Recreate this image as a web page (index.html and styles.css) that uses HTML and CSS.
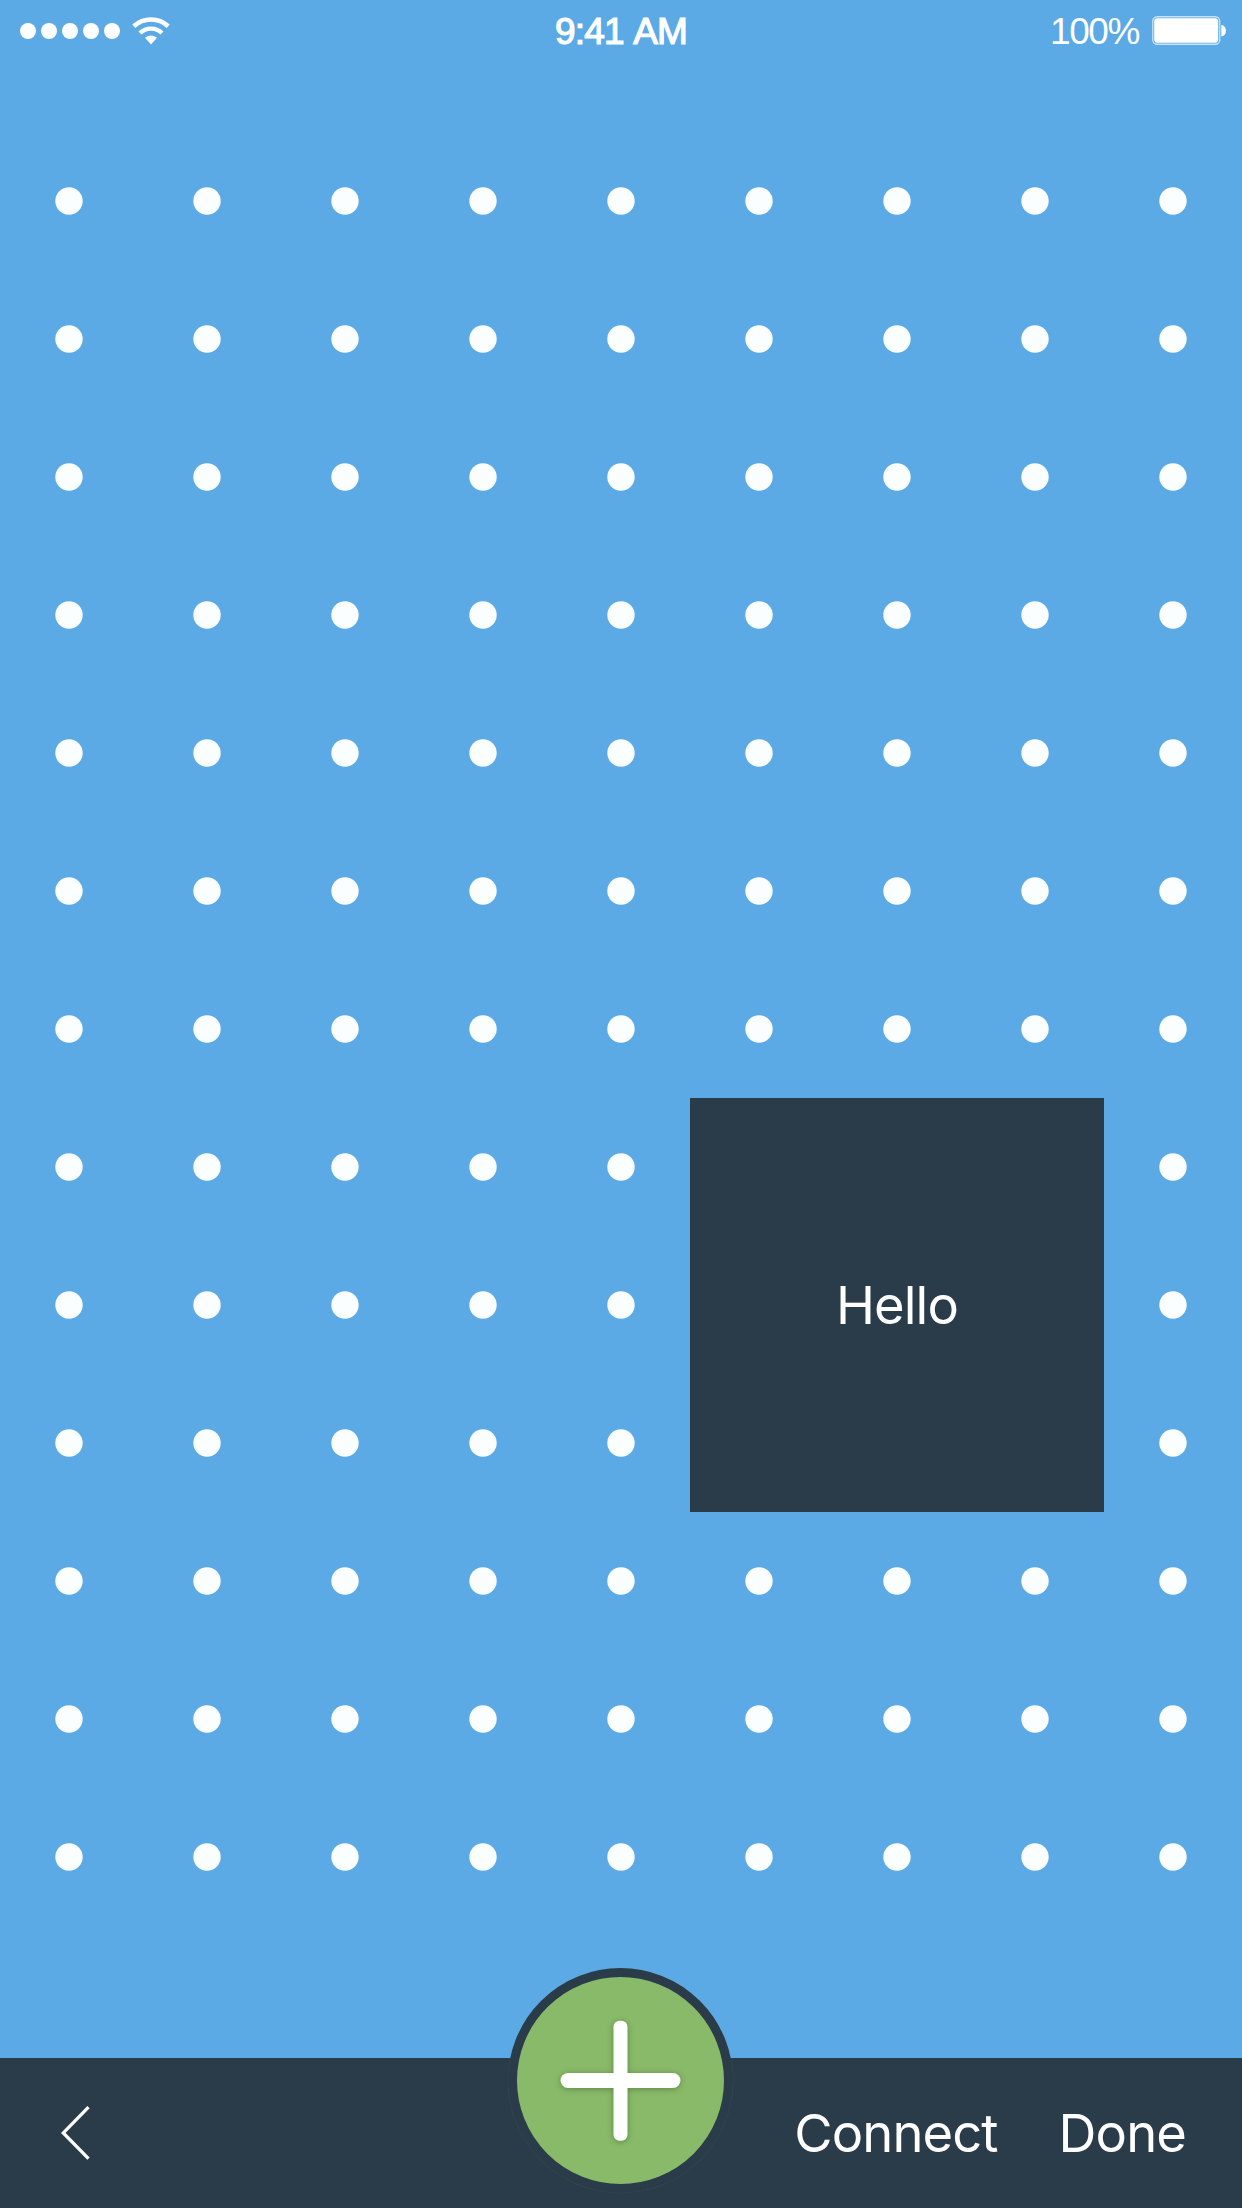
FILE: index.html
```html
<!DOCTYPE html>
<html lang="en">
<head>
<meta charset="utf-8">
<title>Board</title>
<link rel="stylesheet" href="styles.css">
</head>
<body>
<div class="screen">
  <header class="status">
    <div class="status-left">
      <svg class="signal" width="100" height="16" viewBox="0 0 100 16" fill="#fff"><circle cx="8" cy="8" r="8"/><circle cx="29" cy="8" r="8"/><circle cx="50" cy="8" r="8"/><circle cx="71" cy="8" r="8"/><circle cx="92" cy="8" r="8"/></svg>
      <svg class="wifi" width="38" height="28" viewBox="0 0 38 28"><g fill="none" stroke="#fff"><path d="M1.8 9.3A25.3 25.3 0 0 1 36.2 9.3" stroke-width="4.600"/><path d="M8 16A16 16 0 0 1 30 16" stroke-width="4.300"/></g><path d="M13 20.800Q19 16.200 25 20.800L19 27.400Z" fill="#fff"/></svg>
    </div>
    <div class="time">9:41 AM</div>
    <div class="status-right">
      <span class="percent">100%</span>
      <svg class="battery" width="75" height="30" viewBox="0 0 75 30"><rect x=".75" y=".75" width="67" height="27.500" rx="4.500" fill="none" stroke="#c8e3f8" stroke-width="1.300"/><rect x="2.200" y="2.200" width="64" height="24.600" rx="3" fill="#fff"/><path d="M69.300 9C75.500 9.500 75.500 19.800 69.300 20.300Z" fill="#fff"/></svg>
    </div>
  </header>
  <main class="board">
    <svg class="dots" width="1242" height="1794"><defs><pattern id="dot" width="138" height="138" patternUnits="userSpaceOnUse"><circle cx="69" cy="69" r="13.700" fill="#fafeff"/></pattern></defs><rect width="1242" height="1794" fill="url(#dot)"/></svg>
    <div class="card"><span>Hello</span></div>
  </main>
  <footer class="toolbar">
    <button class="back" aria-label="Back"><svg width="30" height="54" viewBox="0 0 30 54" fill="none" stroke="#fff" stroke-width="3.300"><path d="M27.500 1.200L2.300 26.900L27.500 52.600"/></svg></button>
    <button class="add" aria-label="Add"><svg width="207" height="207" viewBox="0 0 207 207"><g class="plus" fill="#fff"><rect x="96.500" y="43.700" width="14" height="120" rx="6"/><rect x="43.500" y="96" width="120" height="15" rx="7.500"/></g></svg></button>
    <div class="actions"><button class="connect">Connect</button><button class="done">Done</button></div>
  </footer>
</div>
</body>
</html>
```
FILE: styles.css
```css
* { box-sizing: border-box; }
body { margin: 0; }
button { margin: 0; padding: 0; border: 0; background: none; color: inherit; font: inherit; letter-spacing: inherit; }
svg { display: block; }

.screen {
  display: flex;
  flex-direction: column;
  width: 1242px;
  height: 2208px;
  overflow: hidden;
  background: #5baae6;
  color: #fff;
  font-family: Inter, "Liberation Sans", sans-serif;
}

.status {
  display: grid;
  grid-template-columns: 1fr auto 1fr;
  align-items: center;
  height: 60px;
  margin-bottom: 72px;
  padding: 0 20px;
  font: 37px/60px "Liberation Sans", sans-serif;
}
.status-left { display: flex; align-items: center; gap: 12px; }
.time { padding-top: 2px; letter-spacing: -0.8px; word-spacing: 2px; -webkit-text-stroke: 1.2px #fff; }
.status-right { display: flex; justify-content: flex-end; align-items: center; gap: 13px; margin-right: -5px; }
.percent { padding-top: 2px; letter-spacing: -1.4px; }

.board {
  display: grid;
  grid-template: repeat(13, 138px) / repeat(9, 138px);
}
.dots { grid-area: 1 / 1 / -1 / -1; }
.card {
  grid-area: 8 / 6 / span 3 / span 3;
  display: flex;
  align-items: center;
  justify-content: center;
  background: #2a3b49;
  font-size: 52.5px;
  letter-spacing: -0.9px;
}

.toolbar {
  display: grid;
  grid-template-columns: 1fr 225px 1fr;
  height: 150px;
  margin-top: auto;
  background: #2a3b49;
}
.back { justify-self: start; align-self: start; margin: 48px 0 0 61px; }
.add {
  width: 225px;
  height: 225px;
  margin: -90px 0 0 -0.5px;
  border: 9px solid #2a3b49;
  border-radius: 50%;
  background: #89ba69;
  box-shadow: 0 0 1px rgba(137, 186, 105, .3);
}
.plus { filter: drop-shadow(0 1px 3px rgba(40, 70, 20, .45)); }
.actions {
  display: flex;
  justify-content: flex-end;
  gap: 61px;
  padding-right: 56px;
  font-size: 52.5px;
  line-height: 150px;
  letter-spacing: -0.9px;
}
```
